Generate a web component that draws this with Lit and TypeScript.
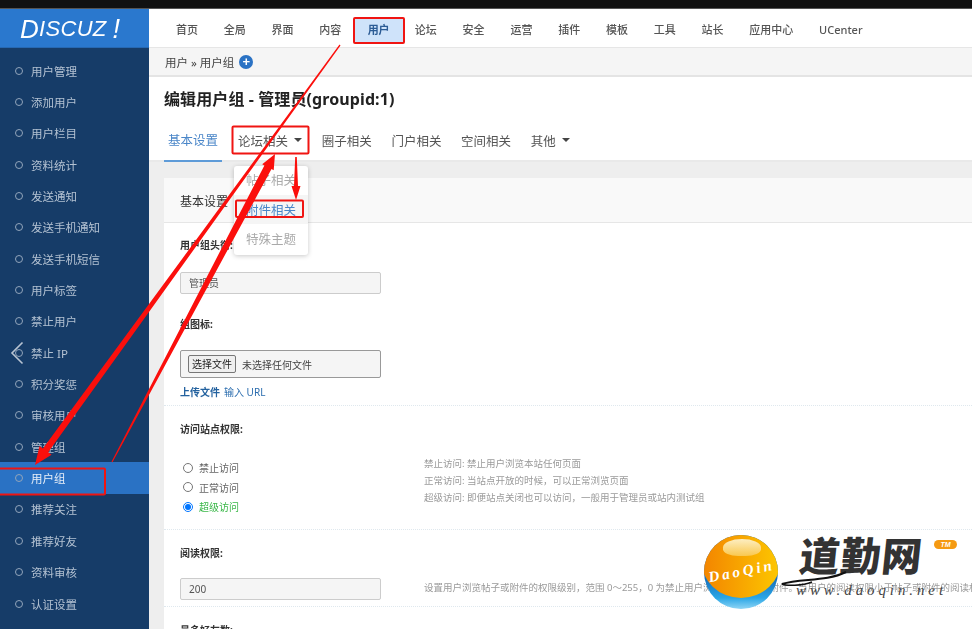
import { LitElement, html, css, svg } from "lit";
import { customElement } from "lit/decorators.js";

const SIDE = ["用户管理","添加用户","用户栏目","资料统计","发送通知","发送手机通知","发送手机短信","用户标签","禁止用户","禁止 IP","积分奖惩","审核用户","管理组","用户组","推荐关注","推荐好友","资料审核","认证设置"];
const NAV = ["首页","全局","界面","内容","用户","论坛","安全","运营","插件","模板","工具","站长","应用中心","UCenter"];

function arrow(x1:number,y1:number,x2:number,y2:number,tail:number,body:number,headW:number,headL:number){
  const dx=x2-x1, dy=y2-y1, l=Math.hypot(dx,dy), ux=dx/l, uy=dy/l, nx=-uy, ny=ux;
  const bx=x2-ux*headL, by=y2-uy*headL;
  const p=(x:number,y:number,o:number)=>`${(x+nx*o).toFixed(1)},${(y+ny*o).toFixed(1)}`;
  const pts=[p(x1,y1,tail/2),p(bx,by,body/2),p(bx,by,headW/2),`${x2},${y2}`,p(bx,by,-headW/2),p(bx,by,-body/2),p(x1,y1,-tail/2)].join(" ");
  return svg`<polygon points=${pts} fill="#fb0f0c"></polygon>`;
}

@customElement("app-root")
export class AppRoot extends LitElement {
  static styles = css`
    :host{display:block;width:972px;height:629px;overflow:hidden;position:relative;background:#eee;
      font-family:"Noto Sans","Noto Sans CJK SC",sans-serif;color:#444;font-size:11px}
    *{box-sizing:border-box}
    .page{height:629px;display:flex;flex-direction:column;filter:blur(.5px)}
    .black{height:9px;background:#111;flex:none;border-bottom:1px solid #555}
    .shell{flex:1;display:flex;min-height:0}
    .side{width:149px;flex:none;background:#163c68;overflow:hidden}
    .logo{height:39px;background:#2a78ce;display:flex;align-items:center;padding:2px 0 0 20px;color:#fff;
      font:italic 400 22px/1 "Liberation Sans",sans-serif;letter-spacing:.3px;border-bottom:1px solid #2668b2}
    .logo b{font-size:26px;font-weight:400}
    .logo i{font-style:italic;font-size:27px;margin-left:6px;font-weight:400}
    .menu{padding-top:7px}
    .item{height:31.35px;display:flex;align-items:center;padding-left:15px;gap:8px;color:#b4c2d2;font-size:11.5px}
    .dot{width:8px;height:8px;border:1.2px solid #92a5bb;border-radius:50%;flex:none}
    .item.on{background:#2a72c4;color:#e6eef8}
    .main{flex:1;min-width:0;display:flex;flex-direction:column;overflow:hidden}
    .nav{height:39px;background:#fff;display:flex;padding:9px 0 0 14px;flex:none;border-bottom:1px solid #e6e6e6}
    .nav span{display:block;height:25px;line-height:24px;padding:0 12.9px;font-size:11px;font-weight:500;color:#555;white-space:nowrap}
    .nav span.on{background:#cfe3fa;color:#2c5c95;font-weight:700;padding:0 0 0 13.5px;margin:0 -2.2px 0 0;width:50px}
    .crumb{height:29px;background:#f5f5f5;border-bottom:2px solid #e4e4e4;display:flex;align-items:center;padding-left:16px;gap:5px;flex:none;font-size:11.5px;color:#444}
    .plus{width:14px;height:14px;border-radius:50%;background:#2a72c4;color:#fff;display:flex;align-items:center;justify-content:center;font:700 13px/1 "Liberation Sans",sans-serif}
    .title{height:43px;background:#fff;padding:10px 0 0 15px;font-size:16px;font-weight:700;color:#222;line-height:24px;letter-spacing:.1px;flex:none}
    .tabs{height:42px;background:#fff;border-bottom:2px solid #e9e9e9;display:flex;padding-left:15px;flex:none}
    .tab{height:42px;display:flex;align-items:center;gap:6px;padding:0 4px 2px;font-size:12.5px;color:#555;white-space:nowrap;margin-right:11.7px}
    .tab.on{color:#4a86c8;border-bottom:2px solid #5e9bd8;width:58px;justify-content:center;margin-right:12px}
    .caret{width:0;height:0;border:4px solid transparent;border-top:4px solid #444;border-bottom:0}
    .wrap{flex:1;padding:16px 0 0 15px;min-height:0}
    .card{background:#fff;height:100%;overflow:hidden}
    .chead{height:45px;background:#f9f9f9;border-bottom:1px solid #e6e6e6;display:flex;align-items:center;padding:2px 0 0 16px;font-size:12px;color:#333}
    .row{padding:0 16px}
    .dotted{border-bottom:1px dotted #dfe8ee}
    .label{height:16px;line-height:16px;font-size:10px;font-weight:700;color:#333}
    .input{width:201px;height:22px;background:#f5f5f5;border:1px solid #ccc;border-radius:2px;padding-left:8px;line-height:20px;font-size:10px;color:#555}
    .file{width:201px;height:28px;background:#f5f5f5;border:1px solid #999;border-radius:2px;display:flex;align-items:center;padding-left:7px;gap:6px;font-size:10px;color:#444}
    .btn{width:48px;height:18px;background:#efefef;border:1px solid #777;border-radius:2px;text-align:center;line-height:16px;color:#222}
    .links{height:16px;line-height:16px;margin-top:6px;font-size:10px;color:#2a6cae}
    .links b{font-weight:700;margin-right:4px;color:#24629f}
    .r1{padding-top:14px;padding-bottom:11px}
    .r1 .input{margin-top:19px}
    .r2{padding-top:11px;padding-bottom:5px}
    .r2 .file{margin-top:18px}
    .r3{padding-top:15px;height:124px}
    .cols{display:flex;margin-top:21px}
    .radios{width:244px;display:flex;flex-direction:column;padding-left:3px}
    .radio{height:19.5px;display:flex;align-items:center;gap:6px;font-size:10px;color:#666}
    .radio input{width:10px;height:10px;margin:0;flex:none}
    .radio.green{color:#3cb84a}
    .help{font-size:9.5px;color:#9a9a9a;line-height:16.8px;white-space:nowrap;margin-top:-2px}
    .r4{padding-top:15px;padding-bottom:6px;height:77px}
    .flex4{display:flex;align-items:center;white-space:nowrap;margin-top:17px}
    .flex4 .input{flex:none;margin-right:43px}
    .flex4 .help{margin-top:-2px}
    .r5{padding-top:15px}
    .menu-drop{position:absolute;left:234px;top:166px;width:74px;height:89px;background:#fff;border-radius:3px;box-shadow:0 1px 5px rgba(0,0,0,.22);
      display:flex;flex-direction:column;filter:blur(.5px)}
    .menu-drop div{height:29.5px;display:flex;align-items:center;justify-content:center;font-size:12.5px;color:#aaa}
    .menu-drop div:first-child{margin-top:-1px}
    .menu-drop .sel{color:#4a86c8;background:#f5f5f5}
    .over{position:absolute;left:0;top:0;width:972px;height:629px;pointer-events:none}
    .chev{position:absolute;left:10px;top:341px}
    .mark{position:absolute;left:700px;top:530px;width:262px;height:84px;pointer-events:none}
    .sphere{position:absolute;left:4px;top:5px;width:74px;height:74px;border-radius:50%;overflow:hidden;
      background:linear-gradient(180deg,#1567b5 55%,#2aa6e6 85%,#8fd5f5)}
    .orange{position:absolute;left:-3px;top:-14px;width:80px;height:77px;border-radius:50%;background:linear-gradient(90deg,#f38300,#fdc800)}
    .shine{position:absolute;left:19px;top:4px;width:38px;height:17px;border-radius:50% 50% 40% 40%;background:linear-gradient(180deg,#fdeec2,#f9c84f)}
    .qin{position:absolute;left:4px;top:29px;color:#fff;font:italic 700 15px/1 "Liberation Serif",serif;letter-spacing:3px;transform:rotate(-11deg);white-space:nowrap}
    .brand{position:absolute;left:100px;top:0;font:900 40px/48px "Noto Sans CJK SC",sans-serif;color:#333;white-space:nowrap;letter-spacing:1px;transform:skewX(-6deg)}
    .swash{position:absolute;left:80px;top:40px;width:70px;height:16px;overflow:visible}
    .url{position:absolute;left:96px;top:51px;font:italic 400 15px/18px "Liberation Serif",serif;letter-spacing:3.9px;color:#444;white-space:nowrap}
    .tm{position:absolute;left:234px;top:10px;width:23px;height:9px;border-radius:5px;background:#f59a12;color:#fff;font:italic 700 7px/9px "Liberation Sans",sans-serif;text-align:center}
  `;

  render() {
    return html`
      <div class="page">
        <div class="black"></div>
        <div class="shell">
          <aside class="side">
            <div class="logo"><b>D</b>ISCUZ<i>!</i></div>
            <div class="menu">
              ${SIDE.map(s => html`<div class="item ${s === "用户组" ? "on" : ""}"><span class="dot"></span>${s}</div>`)}
            </div>
          </aside>
          <main class="main">
            <nav class="nav">${NAV.map(n => html`<span class=${n === "用户" ? "on" : ""}>${n}</span>`)}</nav>
            <div class="crumb">用户 » 用户组 <span class="plus">+</span></div>
            <div class="title">编辑用户组 - 管理员(groupid:1)</div>
            <div class="tabs">
              <div class="tab on">基本设置</div>
              <div class="tab">论坛相关<span class="caret"></span></div>
              <div class="tab">圈子相关</div>
              <div class="tab">门户相关</div>
              <div class="tab">空间相关</div>
              <div class="tab">其他<span class="caret"></span></div>
            </div>
            <div class="wrap">
              <section class="card">
                <div class="chead">基本设置</div>
                <div class="row r1">
                  <div class="label">用户组头衔:</div>
                  <div class="input">管理员</div>
                </div>
                <div class="row r2 dotted">
                  <div class="label">组图标:</div>
                  <div class="file"><span class="btn">选择文件</span>未选择任何文件</div>
                  <div class="links"><b>上传文件</b>输入 URL</div>
                </div>
                <div class="row r3 dotted">
                  <div class="label">访问站点权限:</div>
                  <div class="cols">
                    <div class="radios">
                      <label class="radio"><input type="radio" name="v" />禁止访问</label>
                      <label class="radio"><input type="radio" name="v" />正常访问</label>
                      <label class="radio green"><input type="radio" name="v" checked />超级访问</label>
                    </div>
                    <div class="help">
                      禁止访问: 禁止用户浏览本站任何页面<br />
                      正常访问: 当站点开放的时候，可以正常浏览页面<br />
                      超级访问: 即便站点关闭也可以访问，一般用于管理员或站内测试组
                    </div>
                  </div>
                </div>
                <div class="row r4 dotted">
                  <div class="label">阅读权限:</div>
                  <div class="flex4">
                    <div class="input">200</div>
                    <div class="help">设置用户浏览帖子或附件的权限级别，范围 0～255，0 为禁止用户浏览任何帖子或附件。当用户的阅读权限小于帖子或附件的阅读权限时，用户不能阅读</div>
                  </div>
                </div>
                <div class="row r5"><div class="label">最多好友数:</div></div>
              </section>
            </div>
          </main>
        </div>
      </div>

      <div class="menu-drop">
        <div>帖子相关</div>
        <div class="sel">附件相关</div>
        <div>特殊主题</div>
      </div>

      <svg class="chev" width="14" height="24" viewBox="0 0 14 24"><path d="M12.5 1.5 2 12l10.5 10.5" fill="none" stroke="#b8c4d2" stroke-width="1.6"/></svg>

      <svg class="over" viewBox="0 0 972 629">
        <g fill="none" stroke="#f01512" stroke-width="2">
          <rect x="354" y="18" width="50" height="25" rx="1"></rect>
          <rect x="232.5" y="126.5" width="76" height="27" rx="1"></rect>
          <rect x="236" y="200.5" width="67" height="16.5" rx="1"></rect>
          <rect x="-3" y="468.5" width="108" height="26" rx="1"></rect>
        </g>
        ${arrow(112, 462, 275, 154, 1.2, 8, 13, 15)}
        ${arrow(340, 45, 35, 465, 1.2, 6.5, 15, 18)}
        ${arrow(296, 157, 296, 200, 1.6, 4, 9, 14)}
      </svg>

      <div class="mark">
        <div class="sphere">
          <div class="orange"></div>
          <div class="shine"></div>
          <div class="qin">DaoQin</div>
        </div>
        <div class="brand">道勤网</div>
        <svg class="swash" viewBox="0 0 70 16"><path d="M2 14C20 8 46 12 66 2" fill="none" stroke="#111" stroke-width="2"/><path d="M2 14c4 2 20 2 30-2" fill="none" stroke="#111" stroke-width="1.5"/></svg>
        <div class="url">www.daoqin.net</div>
        <div class="tm">TM</div>
      </div>
    `;
  }
}
